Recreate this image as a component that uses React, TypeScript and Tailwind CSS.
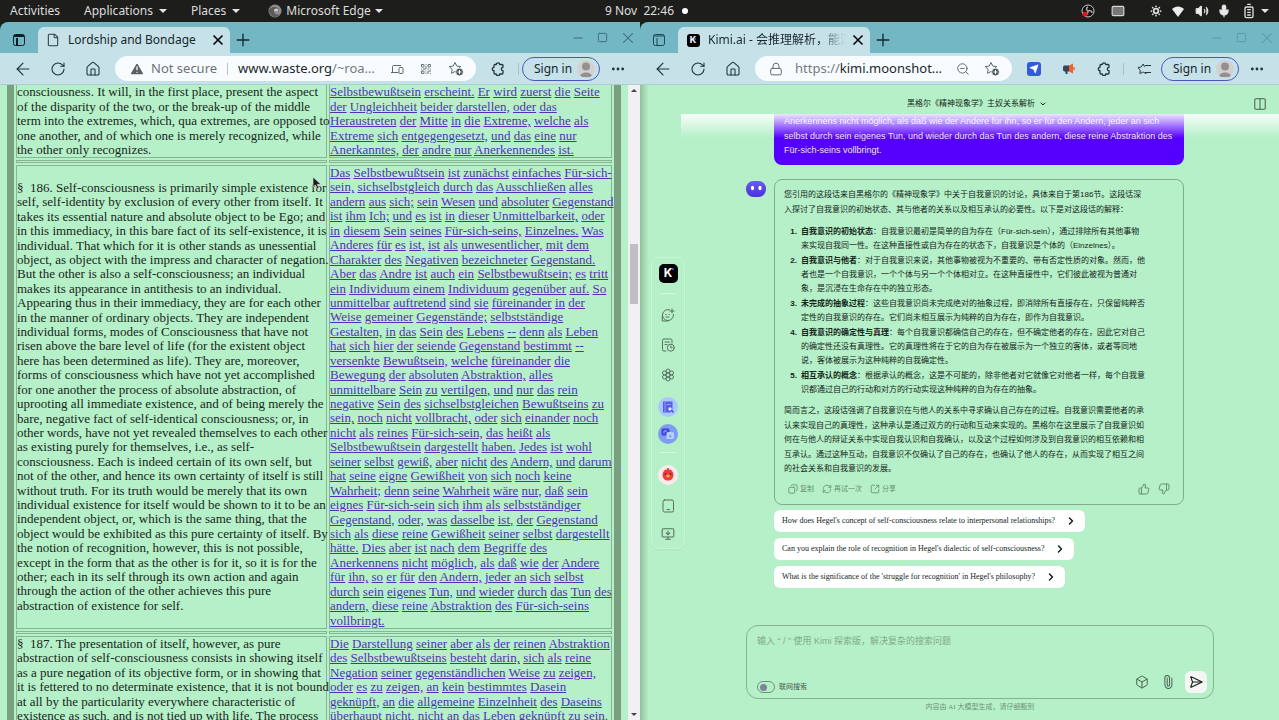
import { useState } from "react";
import type { ReactNode } from "react";
import {
  ArrowLeft,
  BatteryFull,
  Box,
  ChevronDown,
  ChevronRight,
  Columns2,
  Copy,
  Ellipsis,
  File,
  House,
  Keyboard,
  Lock,
  Mic,
  Minus,
  MonitorDown,
  Paperclip,
  Plus,
  QrCode,
  RefreshCw,
  RotateCw,
  Send,
  SendHorizontal,
  Square,
  SquareArrowOutUpRight,
  Star,
  SunDim,
  ThumbsDown,
  ThumbsUp,
  TriangleAlert,
  Volume2,
  X,
  ZoomOut,
} from "lucide-react";

const englishTop = [
  "consciousness. It will, in the first place, present the aspect",
  "of the disparity of the two, or the break-up of the middle",
  "term into the extremes, which, qua extremes, are opposed to",
  "one another, and of which one is merely recognized, while",
  "the other only recognizes.",
];

const germanTop = [
  "Selbstbewußtsein erscheint. Er wird zuerst die Seite",
  "der Ungleichheit beider darstellen, oder das",
  "Heraustreten der Mitte in die Extreme, welche als",
  "Extreme sich entgegengesetzt, und das eine nur",
  "Anerkanntes, der andre nur Anerkennendes ist.",
];

const english186 = [
  "§  186. Self-consciousness is primarily simple existence for",
  "self, self-identity by exclusion of every other from itself. It",
  "takes its essential nature and absolute object to be Ego; and",
  "in this immediacy, in this bare fact of its self-existence, it is",
  "individual. That which for it is other stands as unessential",
  "object, as object with the impress and character of negation.",
  "But the other is also a self-consciousness; an individual",
  "makes its appearance in antithesis to an individual.",
  "Appearing thus in their immediacy, they are for each other",
  "in the manner of ordinary objects. They are independent",
  "individual forms, modes of Consciousness that have not",
  "risen above the bare level of life (for the existent object",
  "here has been determined as life). They are, moreover,",
  "forms of consciousness which have not yet accomplished",
  "for one another the process of absolute abstraction, of",
  "uprooting all immediate existence, and of being merely the",
  "bare, negative fact of self-identical consciousness; or, in",
  "other words, have not yet revealed themselves to each other",
  "as existing purely for themselves, i.e., as self-",
  "consciousness. Each is indeed certain of its own self, but",
  "not of the other, and hence its own certainty of itself is still",
  "without truth. For its truth would be merely that its own",
  "individual existence for itself would be shown to it to be an",
  "independent object, or, which is the same thing, that the",
  "object would be exhibited as this pure certainty of itself. By",
  "the notion of recognition, however, this is not possible,",
  "except in the form that as the other is for it, so it is for the",
  "other; each in its self through its own action and again",
  "through the action of the other achieves this pure",
  "abstraction of existence for self.",
];

const german186 = [
  "Das Selbstbewußtsein ist zunächst einfaches Für-sich-",
  "sein, sichselbstgleich durch das Ausschließen alles",
  "andern aus sich; sein Wesen und absoluter Gegenstand",
  "ist ihm Ich; und es ist in dieser Unmittelbarkeit, oder",
  "in diesem Sein seines Für-sich-seins, Einzelnes. Was",
  "Anderes für es ist, ist als unwesentlicher, mit dem",
  "Charakter des Negativen bezeichneter Gegenstand.",
  "Aber das Andre ist auch ein Selbstbewußtsein; es tritt",
  "ein Individuum einem Individuum gegenüber auf. So",
  "unmittelbar auftretend sind sie füreinander in der",
  "Weise gemeiner Gegenstände; selbstständige",
  "Gestalten, in das Sein des Lebens -- denn als Leben",
  "hat sich hier der seiende Gegenstand bestimmt --",
  "versenkte Bewußtsein, welche füreinander die",
  "Bewegung der absoluten Abstraktion, alles",
  "unmittelbare Sein zu vertilgen, und nur das rein",
  "negative Sein des sichselbstgleichen Bewußtseins zu",
  "sein, noch nicht vollbracht, oder sich einander noch",
  "nicht als reines Für-sich-sein, das heißt als",
  "Selbstbewußtsein dargestellt haben. Jedes ist wohl",
  "seiner selbst gewiß, aber nicht des Andern, und darum",
  "hat seine eigne Gewißheit von sich noch keine",
  "Wahrheit; denn seine Wahrheit wäre nur, daß sein",
  "eignes Für-sich-sein sich ihm als selbstständiger",
  "Gegenstand, oder, was dasselbe ist, der Gegenstand",
  "sich als diese reine Gewißheit seiner selbst dargestellt",
  "hätte. Dies aber ist nach dem Begriffe des",
  "Anerkennens nicht möglich, als daß wie der Andere",
  "für ihn, so er für den Andern, jeder an sich selbst",
  "durch sein eigenes Tun, und wieder durch das Tun des",
  "andern, diese reine Abstraktion des Für-sich-seins",
  "vollbringt.",
];

const english187 = [
  "§  187. The presentation of itself, however, as pure",
  "abstraction of self-consciousness consists in showing itself",
  "as a pure negation of its objective form, or in showing that",
  "it is fettered to no determinate existence, that it is not bound",
  "at all by the particularity everywhere characteristic of",
  "existence as such, and is not tied up with life. The process",
];

const german187 = [
  "Die Darstellung seiner aber als der reinen Abstraktion",
  "des Selbstbewußtseins besteht darin, sich als reine",
  "Negation seiner gegenständlichen Weise zu zeigen,",
  "oder es zu zeigen, an kein bestimmtes Dasein",
  "geknüpft, an die allgemeine Einzelnheit des Daseins",
  "überhaupt nicht, nicht an das Leben geknüpft zu sein.",
];

const bubble = [
  "Anerkennens nicht möglich, als daß wie der Andere für ihn, so er für den Andern, jeder an sich",
  "selbst durch sein eigenes Tun, und wieder durch das Tun des andern, diese reine Abstraktion des",
  "Für-sich-seins vollbringt.",
];

const intro = [
  "您引用的这段话来自黑格尔的《精神现象学》中关于自我意识的讨论，具体来自于第186节。这段话深",
  "入探讨了自我意识的初始状态、其与他者的关系以及相互承认的必要性。以下是对这段话的解释：",
];

const points = [
  {
    title: "自我意识的初始状态",
    lines: [
      "：自我意识最初是简单的自为存在（Für-sich-sein），通过排除所有其他事物",
      "来实现自我同一性。在这种直接性或自为存在的状态下，自我意识是个体的（Einzelnes）。",
    ],
  },
  {
    title: "自我意识与他者",
    lines: [
      "：对于自我意识来说，其他事物被视为不重要的、带有否定性质的对象。然而，他",
      "者也是一个自我意识，一个个体与另一个个体相对立。在这种直接性中，它们彼此被视为普通对",
      "象，是沉浸在生命存在中的独立形态。",
    ],
  },
  {
    title: "未完成的抽象过程",
    lines: [
      "：这些自我意识尚未完成绝对的抽象过程，即消除所有直接存在，只保留纯粹否",
      "定性的自我意识的存在。它们尚未相互展示为纯粹的自为存在，即作为自我意识。",
    ],
  },
  {
    title: "自我意识的确定性与真理",
    lines: [
      "：每个自我意识都确信自己的存在，但不确定他者的存在，因此它对自己",
      "的确定性还没有真理性。它的真理性将在于它的自为存在被展示为一个独立的客体，或者等同地",
      "说，客体被展示为这种纯粹的自我确定性。",
    ],
  },
  {
    title: "相互承认的概念",
    lines: [
      "：根据承认的概念，这是不可能的，除非他者对它就像它对他者一样，每个自我意",
      "识都通过自己的行动和对方的行动实现这种纯粹的自为存在的抽象。",
    ],
  },
];

const summary = [
  "简而言之，这段话强调了自我意识在与他人的关系中寻求确认自己存在的过程。自我意识需要他者的承",
  "认来实现自己的真理性，这种承认是通过双方的行动和互动来实现的。黑格尔在这里展示了自我意识如",
  "何在与他人的辩证关系中实现自我认识和自我确认，以及这个过程如何涉及到自我意识的相互依赖和相",
  "互承认。通过这种互动，自我意识不仅确认了自己的存在，也确认了他人的存在，从而实现了相互之间",
  "的社会关系和自我意识的发展。",
];

const questions = [
  "How does Hegel's concept of self-consciousness relate to interpersonal relationships?",
  "Can you explain the role of recognition in Hegel's dialectic of self-consciousness?",
  "What is the significance of the 'struggle for recognition' in Hegel's philosophy?",
];

function Caret() {
  return <span className="border-x-4 border-t-4 border-x-transparent border-t-[#e4e4e4]" />;
}

function EdgeMark() {
  return (
    <svg viewBox="0 0 14 14" className="size-3.5">
      <circle cx="7" cy="7" r="6.5" fill="#8d8d8d" />
      <path d="M1 8c0-4 3-5 5.500-5C9.500 3 11 5 10.500 7H6c-.500 3 3 4.500 6 3-2 4-8 4-9.500 0z" fill="#5b5b5b" />
      <path d="M6 7c0-1.500 1-2.500 2.300-2.500S10.500 6 10 7z" fill="#d0d0d0" />
    </svg>
  );
}

function SystemBar() {
  return (
    <header className="grid h-[22px] shrink-0 grid-cols-[1fr_auto_1fr] items-center bg-[#1d1d1c] text-xs text-[#dedede]">
      <nav className="flex items-center pl-2.5">
        <button className="mr-6">Activities</button>
        <button className="mr-6 flex items-center gap-1.5">Applications <Caret /></button>
        <button className="mr-7 flex items-center gap-1.5">Places <Caret /></button>
        <button className="flex items-center gap-1">
          <EdgeMark />
          <span>Microsoft Edge</span>
          <Caret />
        </button>
      </nav>
      <time className="whitespace-pre">9 Nov  22:46</time>
      <div className="flex items-center pr-2.5 pl-2">
        <span className="size-1.5 rounded-full bg-white" />
        <span className="flex-1" />
        <svg viewBox="0 0 14 14" className="mr-4 size-3.5">
          <circle cx="7" cy="7" r="6" fill="#111" stroke="#c9c9c9" />
          <path d="M7 7c-2-1-2-3 0-4M7 7c2-1 4 0 4 2M7 7c0 2-1 4-3 3.500" fill="none" stroke="#aaa" strokeWidth="1.500" />
          <circle cx="4" cy="10" r="2.500" fill="#e3141c" />
        </svg>
        <Keyboard className="mr-6 size-3.5 text-[#d6d6d6]" fill="#777" />
        <SunDim className="mr-2 size-3.5" strokeWidth={3} />
        <svg viewBox="0 0 14 14" className="mr-2.5 size-3.5" fill="#eeeeee">
          <path d="M7 13 1 5c3.500-3.500 8.500-3.500 12 0z" />
        </svg>
        <Volume2 className="mr-2 size-3.5" fill="#eee" />
        <Mic className="mr-2.5 size-3.5" fill="#eee" />
        <BatteryFull className="mr-1 size-4 -rotate-90" />
        <Caret />
      </div>
    </header>
  );
}

function KimiLogo({ large = false }: { large?: boolean }) {
  return (
    <span
      className={
        large
          ? "relative flex size-[19px] items-center justify-center rounded-[5px] bg-black font-[Inter] text-xs font-bold text-white"
          : "relative flex size-[13px] items-center justify-center rounded-[3px] bg-black font-[Inter] text-[9px] font-bold text-white"
      }
    >
      K
      <span className="absolute top-1 right-1 size-0.5 rounded-full bg-[#2f6bff]" />
    </span>
  );
}

function TabStrip({ title, icon, dim }: { title: string; icon: ReactNode; dim?: boolean }) {
  return (
    <div className="flex h-[31px] shrink-0 items-end rounded-tl-lg bg-[#73b6c4]">
      <button aria-label="Tab actions" className="flex h-[26px] w-[38px] items-center justify-center">
        <svg viewBox="0 0 12 12" className="size-3" fill="none" stroke={dim ? "#1d4650" : "#0c1e22"}>
          <rect x=".5" y=".5" width="11" height="11" rx="2" />
          <path d="M1 2h10M4 4v7" strokeWidth={dim ? 1 : 2} />
        </svg>
      </button>
      <div className="flex h-[26px] w-48 items-center rounded-t-md bg-[#c6e2e8] pr-1 pl-2">
        <span className="mr-2 flex w-3.5 justify-center">{icon}</span>
        <span
          className={
            dim
              ? "flex-1 overflow-hidden bg-linear-to-r from-[#17272b] from-80% to-transparent bg-clip-text text-xs whitespace-nowrap text-transparent"
              : "flex-1 text-xs whitespace-nowrap text-[#17272b]"
          }
        >
          {title}
        </span>
        <button aria-label="Close tab" className="ml-1"><X className="size-4" strokeWidth={2.5} /></button>
      </div>
      <button aria-label="New tab" className="flex h-[26px] w-[26px] items-center justify-center">
        <Plus className="size-5 text-[#17272b]" strokeWidth={1.6} />
      </button>
      <span className="flex-1" />
      <div className={dim ? "flex h-[31px] items-center text-[#5a98a6]" : "flex h-[31px] items-center text-[#3d6a75]"}>
        <button aria-label="Minimise" className="flex w-[25px] justify-center"><Minus className="size-3.5" strokeWidth={1.7} /></button>
        <button aria-label="Maximise" className="flex w-[25px] justify-center"><Square className="size-[11px]" strokeWidth={2} /></button>
        <button aria-label="Close" className="flex w-[25px] justify-center"><X className="size-[18px]" strokeWidth={1.4} /></button>
      </div>
    </div>
  );
}

function ToolButton({ label, children }: { label: string; children: ReactNode }) {
  return (
    <button aria-label={label} className="flex h-7 w-[35px] shrink-0 items-center justify-center text-[#22343a]">
      {children}
    </button>
  );
}

function StarPlus() {
  return (
    <svg viewBox="0 0 16 16" className="size-4 shrink-0">
      <path d="m7 1.500 1.700 3.600 4 .500-3 2.700.700 3.900L7 10.500l-3.500 1.800.700-4-3-2.700 4-.500z" fill="none" stroke="#5c6a6e" strokeLinejoin="round" />
      <circle cx="11.500" cy="11" r="3.800" fill="#4a5558" stroke="#fff" strokeWidth=".7" />
      <path d="M11.500 9v4M9.500 11h4" stroke="#fff" />
    </svg>
  );
}

function PuzzleIcon() {
  return (
    <svg viewBox="0 0 14 14" className="size-3.5" fill="none" stroke="#22343a" strokeWidth="1.300" strokeLinejoin="round">
      <path d="M3 3.500A1 1 0 0 1 4 2.500h1.300a1.700 1.700 0 0 1 3.400 0H11a1 1 0 0 1 1 1v1.800a1.700 1.700 0 0 0 0 3.400v2.300a1 1 0 0 1-1 1H8.700a1.700 1.700 0 0 1-3.400 0H4a1 1 0 0 1-1-1V8.700a1.700 1.700 0 0 1 0-3.400z" />
    </svg>
  );
}

function DevicesIcon() {
  return (
    <svg viewBox="0 0 14 12" className="mr-4 h-3 w-3.5 shrink-0" fill="none" stroke="#5c6a6e">
      <path d="M8.500 9.500H1M2.500 9.500v-6a1 1 0 0 1 1-1H11" />
      <rect x="9" y="4.500" width="4" height="6" rx="1" />
    </svg>
  );
}

function Toolbar({ address, tools }: { address: ReactNode; tools: ReactNode }) {
  return (
    <div className="flex h-8 shrink-0 items-center border-b border-[#a9cfd0] bg-[#c6e2e8] px-[5px]">
      <ToolButton label="Back"><ArrowLeft className="size-5" strokeWidth={1.4} /></ToolButton>
      <ToolButton label="Refresh"><RotateCw className="size-4" strokeWidth={1.6} /></ToolButton>
      <ToolButton label="Home"><House className="size-4" strokeWidth={1.6} /></ToolButton>
      <div className="mr-1 ml-[5px] flex h-[25px] min-w-0 flex-1 items-center rounded-full bg-[#f8fcff] pr-3 pl-3.5 text-[13px] text-[#20282a]">
        {address}
      </div>
      {tools}
      <button className="flex h-6 w-[78px] shrink-0 items-center justify-between rounded-full border border-[#4958c0] pr-1 pl-[11px] text-xs text-[#17272b]">
        Sign in
        <svg viewBox="0 0 18 18" className="size-[18px] rounded-full">
          <rect width="18" height="18" fill="#d3d1d0" />
          <circle cx="9" cy="6.500" r="4" fill="#949090" />
          <path d="M3 17c0-6 12-6 12 0z" fill="#949090" />
        </svg>
      </button>
      <ToolButton label="Settings and more"><Ellipsis className="size-4" strokeWidth={2.2} /></ToolButton>
    </div>
  );
}

function TextLines({ lines, className }: { lines: string[]; className: string }) {
  return (
    <p className={`flex flex-col justify-between whitespace-pre ${className}`}>
      {lines.map((line) => (
        <span key={line}>{line}</span>
      ))}
    </p>
  );
}

// every German word is its own dictionary link
function LinkedLines({ lines, className }: { lines: string[]; className: string }) {
  return (
    <p className={`flex flex-col justify-between whitespace-pre ${className}`}>
      {lines.map((line) => (
        <span key={line}>
          {line.split(" ").map((word, i) => (
            <span key={i}>
              {i > 0 && " "}
              <a href="#" className="text-[#5430b8] underline">{word}</a>
            </span>
          ))}
        </span>
      ))}
    </p>
  );
}

function Divider() {
  return (
    <tr>
      <td className="h-[3px] border border-[#86b593] p-0" />
      <td className="h-[3px] border border-[#86b593] p-0" />
    </tr>
  );
}

function LordshipPage() {
  return (
    <div className="flex min-h-0 flex-1 bg-[#b6f0c8]">
      <main className="mx-[7px] min-w-0 flex-1 overflow-hidden border-x-[7px] border-[#779f80] font-['Liberation_Serif',serif] text-[13px] leading-[14px] text-[#17261b]">
        <table className="-mt-0.5 w-full table-fixed border-separate border-spacing-0.5">
          <colgroup>
            <col className="w-[311px]" />
            <col />
          </colgroup>
          <tbody>
            <tr>
              <td className="border border-t-0 border-[#86b593] p-0"><TextLines lines={englishTop} className="h-[72px]" /></td>
              <td className="border border-t-0 border-[#86b593] p-0"><LinkedLines lines={germanTop} className="h-[72px]" /></td>
            </tr>
            <Divider />
            <tr>
              <td className="border border-[#86b593] p-0 align-middle"><TextLines lines={english186} className="h-[432px]" /></td>
              <td className="border border-[#86b593] p-0"><LinkedLines lines={german186} className="h-[462px]" /></td>
            </tr>
            <Divider />
            <tr>
              <td className="border border-[#86b593] p-0"><TextLines lines={english187} className="h-[86px]" /></td>
              <td className="border border-[#86b593] p-0"><LinkedLines lines={german187} className="h-[86px]" /></td>
            </tr>
          </tbody>
        </table>
      </main>
      <div className="flex w-3 flex-col items-center bg-[#f3f0f3] py-1">
        <span className="border-x-3 border-b-3 border-x-transparent border-b-[#444]" />
        <span className="flex-[150]" />
        <span className="h-[60px] w-2 bg-[#c1bec3]" />
        <span className="flex-[405]" />
        <span className="border-x-3 border-t-3 border-x-transparent border-t-[#444]" />
      </div>
    </div>
  );
}

function SideNav() {
  return (
    <nav className="ml-[11px] flex w-[34px] shrink-0 flex-col items-center self-center rounded-lg border border-[#c9f5d6] pt-1.5 pb-[7px] text-[#54705e] shadow-xs">
      <KimiLogo large />
      <span className="mt-2.5 h-px w-3.5 bg-[#d6f8df]" />
      <button aria-label="New chat" className="mt-3.5">
        <svg viewBox="0 0 14 14" className="size-3.5" fill="none" stroke="currentColor" strokeLinecap="round">
          <path d="M8.500 1.700A5.500 5.500 0 1 0 12.500 6.500M1.300 7.500V13H7M11 1v4M9 3h4M4.500 6.500h.500M8 6.500h.500M5 9h3" />
        </svg>
      </button>
      <button aria-label="History" className="mt-4">
        <svg viewBox="0 0 14 14" className="size-3.5" fill="none" stroke="currentColor" strokeLinecap="round">
          <path d="M11 5V2.500A1.500 1.500 0 0 0 9.500 1H3a1.500 1.500 0 0 0-1.500 1.500v9A1.500 1.500 0 0 0 3 13h2M4 4h4.500M4 6.500h2" />
          <circle cx="9.800" cy="9.700" r="3.500" />
          <path d="M9.800 8v1.800h1.400" />
        </svg>
      </button>
      <button aria-label="Kimi+" className="mt-4">
        <svg viewBox="0 0 14 14" className="size-3.5" fill="none" stroke="currentColor">
          <circle cx="7" cy="7" r="2" />
          <circle cx="7" cy="3" r="2" />
          <circle cx="7" cy="11" r="2" />
          <circle cx="3.500" cy="5" r="2" />
          <circle cx="10.500" cy="5" r="2" />
          <circle cx="3.500" cy="9" r="2" />
          <circle cx="10.500" cy="9" r="2" />
        </svg>
      </button>
      <button aria-label="Reader" className="mt-[15px]">
        <svg viewBox="0 0 20 20" className="size-5">
          <circle cx="10" cy="10" r="10" fill="#a9c8ff" />
          <path d="M5 4.500h9.500V13l-2 2.500H5z" fill="#5560e6" />
          <path d="M7 5v10M8.500 7.500H13" stroke="#8f9cff" />
          <circle cx="12" cy="12" r="1.700" fill="#dfe7ff" />
          <path d="m13.300 13.300 2.200 2.200" stroke="#3c46cf" strokeWidth="1.300" />
        </svg>
      </button>
      <button aria-label="Translate" className="mt-[7px]">
        <svg viewBox="0 0 20 20" className="size-5">
          <circle cx="10" cy="10" r="10" fill="#7f9cf3" />
          <rect x="3.500" y="4.500" width="8" height="7" rx="1.500" fill="#3f43d6" />
          <path d="M6 9.500V7h3" stroke="#aab6ff" fill="none" />
          <rect x="8.500" y="8" width="7.500" height="7" rx="1.500" fill="#b4d0ff" />
          <path d="M11 12.500h2.500M12.200 10.500v2" stroke="#6f8ff0" />
        </svg>
      </button>
      <span className="mt-2 h-px w-3.5 bg-[#d6f8df]" />
      <button aria-label="Berry" className="mt-3">
        <svg viewBox="0 0 20 20" className="size-5">
          <circle cx="10" cy="10" r="10" fill="#fbeaea" />
          <path d="M6 6c1-2 3-1 4-2 1 1 3 0 4 2 2 2 2 6 0 8s-6 2-8 0-2-6 0-8z" fill="#ea3b3f" />
          <path d="M10 5V3" stroke="#c62d31" strokeWidth="1.300" />
          <ellipse cx="10" cy="11" rx="2" ry="1.500" fill="#f6a52c" />
          <circle cx="7.500" cy="9" r=".8" fill="#5b1013" />
          <circle cx="12.500" cy="9" r=".8" fill="#5b1013" />
        </svg>
      </button>
      <button aria-label="Mobile app" className="mt-3.5">
        <svg viewBox="0 0 14 14" className="size-3.5" fill="none" stroke="currentColor" strokeLinecap="round">
          <rect x="2" y="1" width="10.500" height="12" rx="1.500" />
          <path d="M6 10.500h2.500" />
        </svg>
      </button>
      <button aria-label="Desktop app" className="mt-3.5">
        <MonitorDown className="size-3.5" strokeWidth={1.8} />
      </button>
    </nav>
  );
}

function Answer() {
  return (
    <article className="mt-3.5 rounded-lg border border-[#7fae8c] px-[9px] py-2 text-[8px] leading-[14px] text-[#14251a]">
      <TextLines lines={intro} className="h-[29px]" />
      <ol className="mt-2 flex flex-col gap-px">
        {points.map((point, n) => (
          <li key={point.title} className="flex">
            <b className="w-[17px] shrink-0 pr-1 text-right">{n + 1}.</b>
            <span className="flex flex-col whitespace-nowrap">
              {point.lines.map((line, i) => (
                <span key={line}>
                  {i === 0 && <b>{point.title}</b>}
                  {line}
                </span>
              ))}
            </span>
          </li>
        ))}
      </ol>
      <TextLines lines={summary} className="mt-[7px] h-[72px]" />
      <div className="mt-1.5 flex items-center gap-2 px-1 text-[7px] text-[#66906f]">
        <button className="flex items-center gap-0.5"><Copy className="size-2.5 -scale-x-100" strokeWidth={2} />复制</button>
        <button className="flex items-center gap-0.5"><RefreshCw className="size-2.5" strokeWidth={2} />再试一次</button>
        <button className="flex items-center gap-0.5"><SquareArrowOutUpRight className="size-2.5" strokeWidth={2} />分享</button>
        <span className="flex-1" />
        <button aria-label="Like"><ThumbsUp className="size-3" strokeWidth={2} /></button>
        <button aria-label="Dislike"><ThumbsDown className="size-3" strokeWidth={2} /></button>
      </div>
    </article>
  );
}

function KimiPage() {
  const [draft, setDraft] = useState("");

  return (
    <div className="flex min-h-0 flex-1 bg-[#b6f0c8] bg-linear-to-r from-black/20 to-transparent to-[9px] font-['Liberation_Sans','Noto_Sans_CJK_SC',sans-serif] text-[#14251a]">
      <SideNav />
      <main className="flex min-w-0 flex-1 flex-col">
        <div className="flex h-[29px] shrink-0 items-center pt-2 pr-3">
          <button className="ml-4 flex flex-1 items-center justify-center gap-1 text-[8px]">
            黑格尔《精神现象学》主奴关系解析 <ChevronDown className="size-2" strokeWidth={3} />
          </button>
          <button aria-label="Split view"><Columns2 className="size-3.5 text-[#47604f]" strokeWidth={1.8} /></button>
        </div>
        <section className="relative flex min-h-0 flex-1 flex-col items-center pr-1">
          <div className="flex w-full max-w-[468px] flex-1">
            <div className="w-7 shrink-0 pt-[67px]">
              <svg viewBox="0 0 20 16" className="h-4 w-5">
                <defs>
                  <linearGradient id="face" x2="0" y2="1">
                    <stop stopColor="#6a5ee8" />
                    <stop offset="1" stopColor="#4a2fe0" />
                  </linearGradient>
                </defs>
                <rect width="20" height="16" rx="7.500" fill="url(#face)" />
                <ellipse cx="6.500" cy="7" rx="1.600" ry="2.200" fill="#fff" />
                <ellipse cx="14" cy="7" rx="1.600" ry="2.200" fill="#fff" />
              </svg>
            </div>
            <div className="mr-[30px] min-w-0 flex-1">
              <TextLines lines={bubble} className="h-[51px] rounded-b-lg bg-[#5500ff] px-2.5 pb-2 text-[9px] leading-[14px] text-[#ebe0ff]" />
              <Answer />
              <ul className="mt-[5px] flex flex-col items-start gap-1.5">
                {questions.map((q) => (
                  <li key={q}>
                    <button className="flex h-[22px] items-center gap-2.5 rounded-md bg-white px-2 font-['Liberation_Serif',serif] text-[8px] whitespace-nowrap">
                      {q}
                      <ChevronRight className="size-3" strokeWidth={3} />
                    </button>
                  </li>
                ))}
              </ul>
            </div>
          </div>
          <form className="flex h-[74px] w-full max-w-[468px] shrink-0 flex-col rounded-xl border border-[#84b391] px-2.5 pt-2 pb-[5px]">
            <textarea
              aria-label="Message"
              value={draft}
              onChange={(e) => setDraft(e.target.value)}
              placeholder="输入 “ / ” 使用 Kimi 探索版，解决复杂的搜索问题"
              className="min-h-0 flex-1 resize-none text-[9px] leading-[14px] outline-none placeholder:text-[#7faa8a]"
            />
            <div className="flex items-center text-[#456150]">
              <label className="flex items-center gap-1 self-end text-[7px] leading-[10px]">
                <input type="checkbox" className="peer sr-only" />
                <span className="flex h-3 w-[18px] items-center rounded-full border border-[#6c9677] px-0.5">
                  <span className="size-[7px] rounded-full bg-[#84819f]" />
                </span>
                联网搜索
              </label>
              <span className="flex-1" />
              <button type="button" aria-label="Tools" className="mr-3"><Box className="size-3.5" strokeWidth={1.7} /></button>
              <button type="button" aria-label="Attach" className="mr-2.5"><Paperclip className="size-3.5 -rotate-45" strokeWidth={1.7} /></button>
              <button type="button" aria-label="Send" className="-mr-1 flex size-[22px] items-center justify-center rounded-md bg-[#f4f6f5] text-[#1b1b1b]">
                <SendHorizontal className="size-3.5" strokeWidth={2} />
              </button>
            </div>
          </form>
          <p className="h-[21px] pt-0.5 font-['Liberation_Serif','Noto_Sans_CJK_SC',serif] text-[7px] leading-[12px] text-[#6d9478]">
            内容由 AI 大模型生成，请仔细甄别
          </p>
          <div className="pointer-events-none absolute top-0 right-0 -left-1 h-6 bg-linear-to-b from-white/90 to-transparent" />
        </section>
      </main>
    </div>
  );
}

export default function App() {
  return (
    <div className="relative flex h-screen flex-col overflow-hidden bg-[#1d1d1c] font-['Noto_Sans','Noto_Sans_CJK_SC',sans-serif]">
      <SystemBar />
      <div className="grid min-h-0 flex-1 grid-cols-[640fr_639fr]">
        <section className="flex min-h-0 min-w-0 flex-col">
          <TabStrip title="Lordship and Bondage" icon={<File className="size-3.5 text-[#2c3d42]" strokeWidth={1.8} />} />
          <Toolbar
            address={
              <>
                <TriangleAlert className="mr-1.5 size-4 shrink-0 text-[#f8fcff]" fill="#5a5f62" />
                <span className="text-[#6c7376]">Not secure</span>
                <span className="mx-2.5 h-3 w-px bg-[#b9bfc2]" />
                <input aria-label="Address" readOnly value="www.waste.org" className="field-sizing-content outline-none" />
                <span className="text-[#747b7e]">/~roa…</span>
                <span className="flex-1" />
                <DevicesIcon />
                <QrCode className="mr-4 size-3 shrink-0 text-[#5c6a6e]" />
                <StarPlus />
              </>
            }
            tools={
              <>
                <ToolButton label="Extensions"><PuzzleIcon /></ToolButton>
                <span className="mx-[3px] h-3 w-px bg-[#a8bfc5]" />
              </>
            }
          />
          <LordshipPage />
        </section>
        <section className="flex min-h-0 min-w-0 flex-col">
          <TabStrip dim title="Kimi.ai - 会推理解析，能深度思考" icon={<KimiLogo />} />
          <Toolbar
            address={
              <>
                <Lock className="mr-3 size-3.5 shrink-0 text-[#5c6a6e]" strokeWidth={1.7} />
                <span className="text-[#747b7e]">https://</span>
                <input aria-label="Address" readOnly value="kimi.moonshot…" className="field-sizing-content outline-none" />
                <span className="flex-1" />
                <ZoomOut className="mr-3.5 size-3.5 shrink-0 text-[#5c6a6e]" strokeWidth={1.7} />
                <StarPlus />
              </>
            }
            tools={
              <>
                <ToolButton label="Send to device">
                  <span className="flex size-3.5 items-center justify-center rounded-[3px] bg-[#315bdc]">
                    <Send className="size-2.5 text-white" fill="#fff" strokeWidth={1} />
                  </span>
                </ToolButton>
                <ToolButton label="Announcements">
                  <svg viewBox="0 0 14 12" className="h-3 w-3.5">
                    <path d="M1 4.500C1 3 2 2.500 3 2.500h4v6H5.500V11H3.500V8.500H3C2 8.500 1 8 1 6.500z" fill="#33475a" />
                    <path d="M7 2.500 11 .500v10l-4-2z" fill="#f4602c" />
                    <path d="M12 4v3" stroke="#f4602c" strokeWidth="1.500" />
                  </svg>
                </ToolButton>
                <ToolButton label="Extensions"><PuzzleIcon /></ToolButton>
                <span className="mx-0.5 h-3 w-px bg-[#a8bfc5]" />
                <ToolButton label="Favourites">
                  <Star className="size-3" strokeWidth={2} />
                  <span className="-ml-1 h-2 w-1.5 border-y border-[#22343a] bg-[#c6e2e8]" />
                </ToolButton>
              </>
            }
          />
          <KimiPage />
        </section>
      </div>
      <svg viewBox="0 0 10 14" className="absolute top-[176px] left-[312px] h-3.5 w-2.5">
        <path d="M1 1v10l2.500-2 1.700 4 1.800-.800-1.700-3.800H9z" fill="#1c1c1c" stroke="#d9d9d9" strokeWidth=".7" />
      </svg>
    </div>
  );
}
